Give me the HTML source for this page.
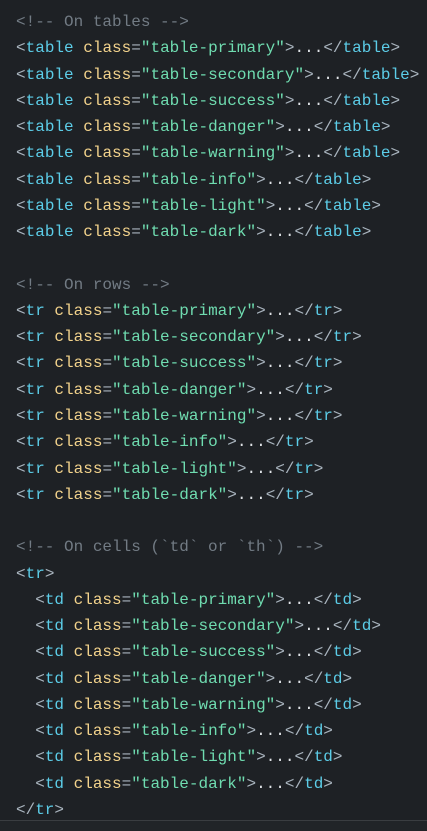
<!DOCTYPE html>
<html><head><meta charset="utf-8"><style>
html,body{margin:0;padding:0;background:#1e2125;width:427px;height:830px;overflow:hidden}
pre{margin:0;padding:9px 0 0 16px;font-family:"Liberation Mono","DejaVu Sans Mono",monospace;font-size:16px;line-height:26.27px;color:#dee2e6;white-space:pre}
.c{color:#727b84}.p{color:#a9b4be}.t{color:#5ccde8}.a{color:#f3d38c}.s{color:#6fdcb0}
.bar{position:absolute;left:0;top:820px;width:427px;height:10px;background:#212428;border-top:1px solid #3a3d41}
</style></head><body>
<pre><span class="c">&lt;!-- On tables --&gt;</span>
<span class="p">&lt;</span><span class="t">table</span> <span class="a">class</span><span class="p">=</span><span class="s">"table-primary"</span><span class="p">&gt;</span>...<span class="p">&lt;/</span><span class="t">table</span><span class="p">&gt;</span>
<span class="p">&lt;</span><span class="t">table</span> <span class="a">class</span><span class="p">=</span><span class="s">"table-secondary"</span><span class="p">&gt;</span>...<span class="p">&lt;/</span><span class="t">table</span><span class="p">&gt;</span>
<span class="p">&lt;</span><span class="t">table</span> <span class="a">class</span><span class="p">=</span><span class="s">"table-success"</span><span class="p">&gt;</span>...<span class="p">&lt;/</span><span class="t">table</span><span class="p">&gt;</span>
<span class="p">&lt;</span><span class="t">table</span> <span class="a">class</span><span class="p">=</span><span class="s">"table-danger"</span><span class="p">&gt;</span>...<span class="p">&lt;/</span><span class="t">table</span><span class="p">&gt;</span>
<span class="p">&lt;</span><span class="t">table</span> <span class="a">class</span><span class="p">=</span><span class="s">"table-warning"</span><span class="p">&gt;</span>...<span class="p">&lt;/</span><span class="t">table</span><span class="p">&gt;</span>
<span class="p">&lt;</span><span class="t">table</span> <span class="a">class</span><span class="p">=</span><span class="s">"table-info"</span><span class="p">&gt;</span>...<span class="p">&lt;/</span><span class="t">table</span><span class="p">&gt;</span>
<span class="p">&lt;</span><span class="t">table</span> <span class="a">class</span><span class="p">=</span><span class="s">"table-light"</span><span class="p">&gt;</span>...<span class="p">&lt;/</span><span class="t">table</span><span class="p">&gt;</span>
<span class="p">&lt;</span><span class="t">table</span> <span class="a">class</span><span class="p">=</span><span class="s">"table-dark"</span><span class="p">&gt;</span>...<span class="p">&lt;/</span><span class="t">table</span><span class="p">&gt;</span>

<span class="c">&lt;!-- On rows --&gt;</span>
<span class="p">&lt;</span><span class="t">tr</span> <span class="a">class</span><span class="p">=</span><span class="s">"table-primary"</span><span class="p">&gt;</span>...<span class="p">&lt;/</span><span class="t">tr</span><span class="p">&gt;</span>
<span class="p">&lt;</span><span class="t">tr</span> <span class="a">class</span><span class="p">=</span><span class="s">"table-secondary"</span><span class="p">&gt;</span>...<span class="p">&lt;/</span><span class="t">tr</span><span class="p">&gt;</span>
<span class="p">&lt;</span><span class="t">tr</span> <span class="a">class</span><span class="p">=</span><span class="s">"table-success"</span><span class="p">&gt;</span>...<span class="p">&lt;/</span><span class="t">tr</span><span class="p">&gt;</span>
<span class="p">&lt;</span><span class="t">tr</span> <span class="a">class</span><span class="p">=</span><span class="s">"table-danger"</span><span class="p">&gt;</span>...<span class="p">&lt;/</span><span class="t">tr</span><span class="p">&gt;</span>
<span class="p">&lt;</span><span class="t">tr</span> <span class="a">class</span><span class="p">=</span><span class="s">"table-warning"</span><span class="p">&gt;</span>...<span class="p">&lt;/</span><span class="t">tr</span><span class="p">&gt;</span>
<span class="p">&lt;</span><span class="t">tr</span> <span class="a">class</span><span class="p">=</span><span class="s">"table-info"</span><span class="p">&gt;</span>...<span class="p">&lt;/</span><span class="t">tr</span><span class="p">&gt;</span>
<span class="p">&lt;</span><span class="t">tr</span> <span class="a">class</span><span class="p">=</span><span class="s">"table-light"</span><span class="p">&gt;</span>...<span class="p">&lt;/</span><span class="t">tr</span><span class="p">&gt;</span>
<span class="p">&lt;</span><span class="t">tr</span> <span class="a">class</span><span class="p">=</span><span class="s">"table-dark"</span><span class="p">&gt;</span>...<span class="p">&lt;/</span><span class="t">tr</span><span class="p">&gt;</span>

<span class="c">&lt;!-- On cells (`td` or `th`) --&gt;</span>
<span class="p">&lt;</span><span class="t">tr</span><span class="p">&gt;</span>
  <span class="p">&lt;</span><span class="t">td</span> <span class="a">class</span><span class="p">=</span><span class="s">"table-primary"</span><span class="p">&gt;</span>...<span class="p">&lt;/</span><span class="t">td</span><span class="p">&gt;</span>
  <span class="p">&lt;</span><span class="t">td</span> <span class="a">class</span><span class="p">=</span><span class="s">"table-secondary"</span><span class="p">&gt;</span>...<span class="p">&lt;/</span><span class="t">td</span><span class="p">&gt;</span>
  <span class="p">&lt;</span><span class="t">td</span> <span class="a">class</span><span class="p">=</span><span class="s">"table-success"</span><span class="p">&gt;</span>...<span class="p">&lt;/</span><span class="t">td</span><span class="p">&gt;</span>
  <span class="p">&lt;</span><span class="t">td</span> <span class="a">class</span><span class="p">=</span><span class="s">"table-danger"</span><span class="p">&gt;</span>...<span class="p">&lt;/</span><span class="t">td</span><span class="p">&gt;</span>
  <span class="p">&lt;</span><span class="t">td</span> <span class="a">class</span><span class="p">=</span><span class="s">"table-warning"</span><span class="p">&gt;</span>...<span class="p">&lt;/</span><span class="t">td</span><span class="p">&gt;</span>
  <span class="p">&lt;</span><span class="t">td</span> <span class="a">class</span><span class="p">=</span><span class="s">"table-info"</span><span class="p">&gt;</span>...<span class="p">&lt;/</span><span class="t">td</span><span class="p">&gt;</span>
  <span class="p">&lt;</span><span class="t">td</span> <span class="a">class</span><span class="p">=</span><span class="s">"table-light"</span><span class="p">&gt;</span>...<span class="p">&lt;/</span><span class="t">td</span><span class="p">&gt;</span>
  <span class="p">&lt;</span><span class="t">td</span> <span class="a">class</span><span class="p">=</span><span class="s">"table-dark"</span><span class="p">&gt;</span>...<span class="p">&lt;/</span><span class="t">td</span><span class="p">&gt;</span>
<span class="p">&lt;/</span><span class="t">tr</span><span class="p">&gt;</span></pre>
<div class="bar"></div>
</body></html>
